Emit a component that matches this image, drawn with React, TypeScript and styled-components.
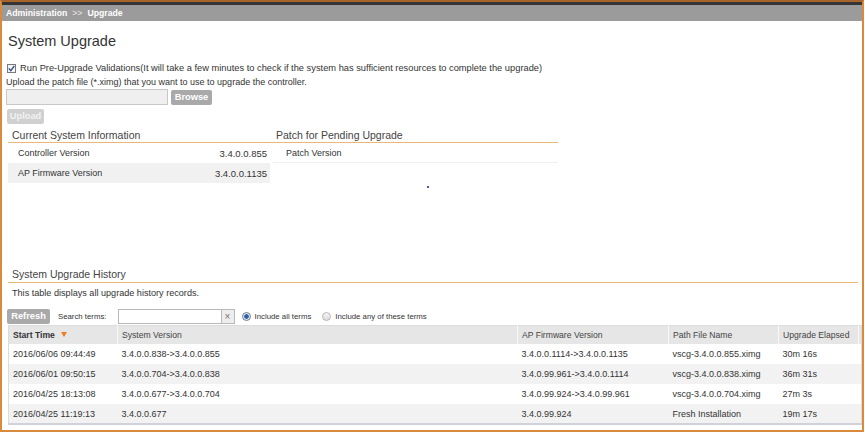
import styled, { createGlobalStyle } from "styled-components";

const GlobalStyle = createGlobalStyle`
    html, body {
        margin: 0;
        padding: 0;
        background: #fff;
    }
    body {
        font-family: "Liberation Sans", Arial, sans-serif;
        color: #333;
    }
`

const orange = '#d98a3d'
const lightOrange = '#e9b877'

const Frame = styled.div`
    width: 864px;
    height: 432px;
    box-sizing: border-box;
    border-top: 2px solid #a8642a;
    border-left: 2px solid ${orange};
    border-right: 2px solid ${orange};
    border-bottom: 2px solid ${orange};
    overflow: hidden;
`

const Breadcrumb = styled.div`
    height: 16px;
    border-top: 3px solid #353535;
    background: #9b9b9b;
    display: flex;
    align-items: center;
    gap: 5px;
    padding-left: 4px;
    font-size: 8.7px;
    color: #fff;
`

const Crumb = styled.span<{ dim?: boolean }>`
    font-weight: ${p => p.dim ? 'normal' : 'bold'};
    color: ${p => p.dim ? '#e6e6e6' : '#fff'};
`

const Content = styled.div`
    padding-left: 4px;
    display: flex;
    flex-direction: column;
    align-items: flex-start;
`

const Title = styled.h1`
    margin: 11px 0 0 2px;
    font-size: 14.5px;
    line-height: 18px;
    font-weight: normal;
    color: #333;
`

const CheckRow = styled.label`
    margin-top: 12px;
    margin-left: 1px;
    height: 12px;
    display: flex;
    align-items: center;
    gap: 4px;
    font-size: 9.3px;
    color: #333;
`

const CheckBox = styled.span`
    width: 7px;
    height: 7px;
    border: 1px solid #7a7a7a;
    background: #f4f4f4;
    display: flex;
    align-items: center;
    justify-content: center;
`

const Line = styled.div<{ top?: number; left?: number; size?: number }>`
    margin-top: ${p => p.top ?? 0}px;
    margin-left: ${p => p.left ?? 0}px;
    font-size: ${p => p.size ?? 9}px;
    line-height: 12px;
    color: #333;
`

const FileRow = styled.div`
    margin-top: 1px;
    display: flex;
    align-items: center;
    gap: 3px;
    height: 16px;
`

const FileBox = styled.div`
    width: 160px;
    height: 14px;
    border: 1px solid #c8c8c8;
    background: #efefef;
`

const Button = styled.button<{ disabled?: boolean; w: number }>`
    display: block;
    width: ${p => p.w}px;
    height: 15px;
    padding: 0;
    border: none;
    border-radius: 2px;
    background: ${p => p.disabled ? '#d0d0d0' : '#a9a9a9'};
    color: ${p => p.disabled ? '#f2f2f2' : '#fff'};
    font-family: "Liberation Sans", Arial, sans-serif;
    font-size: 9.3px;
    font-weight: bold;
    line-height: 15px;
`

const UploadWrap = styled.div`
    display: flex;
    margin: 4px 0 0 1px;
`

const Info = styled.div`
    margin: 3px 0 0 2px;
    width: 550px;
`

const InfoHead = styled.div`
    height: 15px;
    display: flex;
    align-items: center;
    padding-left: 4px;
    border-bottom: 1px solid ${lightOrange};
    font-size: 10.5px;
    color: #444;
`

const InfoHeading = styled.span<{ w?: number }>`
    width: ${p => p.w ? `${p.w}px` : 'auto'};
`

const InfoGrid = styled.div`
    display: grid;
    grid-template-columns: 262px 1fr;
    column-gap: 3px;
`

const InfoRow = styled.div<{ shade?: boolean }>`
    height: 20px;
    display: flex;
    align-items: center;
    justify-content: space-between;
    padding: 0 3px 0 10px;
    background: ${p => p.shade ? '#f1f1f1' : '#fff'};
    font-size: 9px;
    color: #333;
`

const Value = styled.span`
    font-size: 9.5px;
`

const PatchRow = styled.div`
    height: 19px;
    display: flex;
    align-items: center;
    padding-left: 13px;
    border-bottom: 1px solid #f0f0f0;
    font-size: 9px;
    color: #333;
`

const Dot = styled.div`
    width: 2px;
    height: 2px;
    margin: 23px 0 0 154px;
    background: #5a4fb0;
`

const HistoryHead = styled.div`
    margin: 78px 0 0 2px;
    width: 850px;
    height: 17px;
    display: flex;
    align-items: center;
    padding-left: 4px;
    box-sizing: border-box;
    border-bottom: 1px solid ${lightOrange};
    font-size: 10.5px;
    color: #444;
`

const Toolbar = styled.div`
    margin: 10px 0 0 1px;
    height: 15px;
    display: flex;
    align-items: center;
    font-size: 7.8px;
    color: #333;
`

const ToolLabel = styled.span<{ ml: number }>`
    margin-left: ${p => p.ml}px;
`

const SearchBox = styled.div`
    margin-left: 11px;
    display: flex;
    height: 15px;
`

const SearchInput = styled.div`
    width: 102px;
    border: 1px solid #b8b8b8;
    border-right: none;
    background: #fff;
`

const ClearButton = styled.div`
    width: 12px;
    border: 1px solid #b8b8b8;
    background: #ededed;
    color: #777;
    font-size: 10px;
    line-height: 13px;
    text-align: center;
`

const Radio = styled.span<{ checked?: boolean; ml: number }>`
    margin-left: ${p => p.ml}px;
    margin-right: 4px;
    width: 7px;
    height: 7px;
    border-radius: 50%;
    border: 1px solid ${p => p.checked ? '#6f7f96' : '#b4b4b4'};
    background: ${p => p.checked
        ? 'radial-gradient(circle, #2f5fa8 0 2px, #dfe6f0 2.5px)'
        : 'linear-gradient(#f6f6f6, #dcdcdc)'};
`

const Table = styled.table`
    margin: 1px 0 0 2px;
    width: 853px;
    table-layout: fixed;
    border-collapse: collapse;
    border: 1px solid #dcdcdc;
    border-bottom: 2px solid #cfd2d8;
    font-size: 9px;
    color: #333;
`

const Th = styled.th<{ bold?: boolean }>`
    height: 18px;
    padding: 0 0 0 4px;
    background: #e6e6e6;
    border-left: 1px solid #f8f8f8;
    text-align: left;
    font-size: 8.6px;
    font-weight: ${p => p.bold ? 'bold' : 'normal'};
    color: ${p => p.bold ? '#333' : '#444'};
    white-space: nowrap;
    overflow: hidden;
    &:first-child {
        border-left: none;
    }
`

const SortArrow = styled.span`
    display: inline-block;
    margin-left: 6px;
    border-left: 3px solid transparent;
    border-right: 3px solid transparent;
    border-top: 5px solid #f07c1e;
    vertical-align: 1px;
`

const Tr = styled.tr`
    height: 20px;
    &:nth-child(even) td {
        background: #f2f2f2;
    }
`

const Td = styled.td`
    padding: 0 0 0 4px;
    background: #fff;
    white-space: nowrap;
    overflow: hidden;
`

type Row = [string, string, string, string, string]

const rows: Row[] = [
    ['2016/06/06 09:44:49', '3.4.0.0.838->3.4.0.0.855', '3.4.0.0.1114->3.4.0.0.1135', 'vscg-3.4.0.0.855.ximg', '30m 16s'],
    ['2016/06/01 09:50:15', '3.4.0.0.704->3.4.0.0.838', '3.4.0.99.961->3.4.0.0.1114', 'vscg-3.4.0.0.838.ximg', '36m 31s'],
    ['2016/04/25 18:13:08', '3.4.0.0.677->3.4.0.0.704', '3.4.0.99.924->3.4.0.99.961', 'vscg-3.4.0.0.704.ximg', '27m 3s'],
    ['2016/04/25 11:19:13', '3.4.0.0.677', '3.4.0.99.924', 'Fresh Installation', '19m 17s'],
]

export default function App() {
    return (
        <>
            <GlobalStyle />
            <Frame>
                <Breadcrumb>
                    <Crumb>Administration</Crumb>
                    <Crumb dim>&gt;&gt;</Crumb>
                    <Crumb>Upgrade</Crumb>
                </Breadcrumb>
                <Content>
                    <Title>System Upgrade</Title>
                    <CheckRow>
                        <CheckBox>
                            <svg width="7" height="7" viewBox="0 0 7 7">
                                <path d="M0.8 3.4 L2.8 5.6 L6.3 0.9" fill="none" stroke="#2d4f8a" strokeWidth="1.4" />
                            </svg>
                        </CheckBox>
                        Run Pre-Upgrade Validations(It will take a few minutes to check if the system has sufficient resources to complete the upgrade)
                    </CheckRow>
                    <Line top={2}>Upload the patch file (*.ximg) that you want to use to upgrade the controller.</Line>
                    <FileRow>
                        <FileBox />
                        <Button w={41}>Browse</Button>
                    </FileRow>
                    <UploadWrap>
                        <Button w={37} disabled>Upload</Button>
                    </UploadWrap>
                    <Info>
                        <InfoHead>
                            <InfoHeading w={264}>Current System Information</InfoHeading>
                            <InfoHeading>Patch for Pending Upgrade</InfoHeading>
                        </InfoHead>
                        <InfoGrid>
                            <div>
                                <InfoRow>
                                    <span>Controller Version</span>
                                    <Value>3.4.0.0.855</Value>
                                </InfoRow>
                                <InfoRow shade>
                                    <span>AP Firmware Version</span>
                                    <Value>3.4.0.0.1135</Value>
                                </InfoRow>
                            </div>
                            <div>
                                <PatchRow>Patch Version</PatchRow>
                                <Dot />
                            </div>
                        </InfoGrid>
                    </Info>
                    <HistoryHead>System Upgrade History</HistoryHead>
                    <Line top={4} left={6} size={9.1}>This table displays all upgrade history records.</Line>
                    <Toolbar>
                        <Button w={43}>Refresh</Button>
                        <ToolLabel ml={8}>Search terms:</ToolLabel>
                        <SearchBox>
                            <SearchInput />
                            <ClearButton>×</ClearButton>
                        </SearchBox>
                        <Radio checked ml={7} />
                        <span>Include all terms</span>
                        <Radio ml={11} />
                        <span>Include any of these terms</span>
                    </Toolbar>
                    <Table>
                        <colgroup>
                            <col style={{ width: 109 }} />
                            <col style={{ width: 400 }} />
                            <col style={{ width: 151 }} />
                            <col style={{ width: 110 }} />
                            <col style={{ width: 80 }} />
                            <col style={{ width: 3 }} />
                        </colgroup>
                        <thead>
                            <tr>
                                <Th bold>Start Time<SortArrow /></Th>
                                <Th>System Version</Th>
                                <Th>AP Firmware Version</Th>
                                <Th>Path File Name</Th>
                                <Th>Upgrade Elapsed</Th>
                                <Th />
                            </tr>
                        </thead>
                        <tbody>
                            {rows.map(r => (
                                <Tr key={r[0]}>
                                    {r.map((c, i) => <Td key={i}>{c}</Td>)}
                                    <Td />
                                </Tr>
                            ))}
                        </tbody>
                    </Table>
                </Content>
            </Frame>
        </>
    )
}
